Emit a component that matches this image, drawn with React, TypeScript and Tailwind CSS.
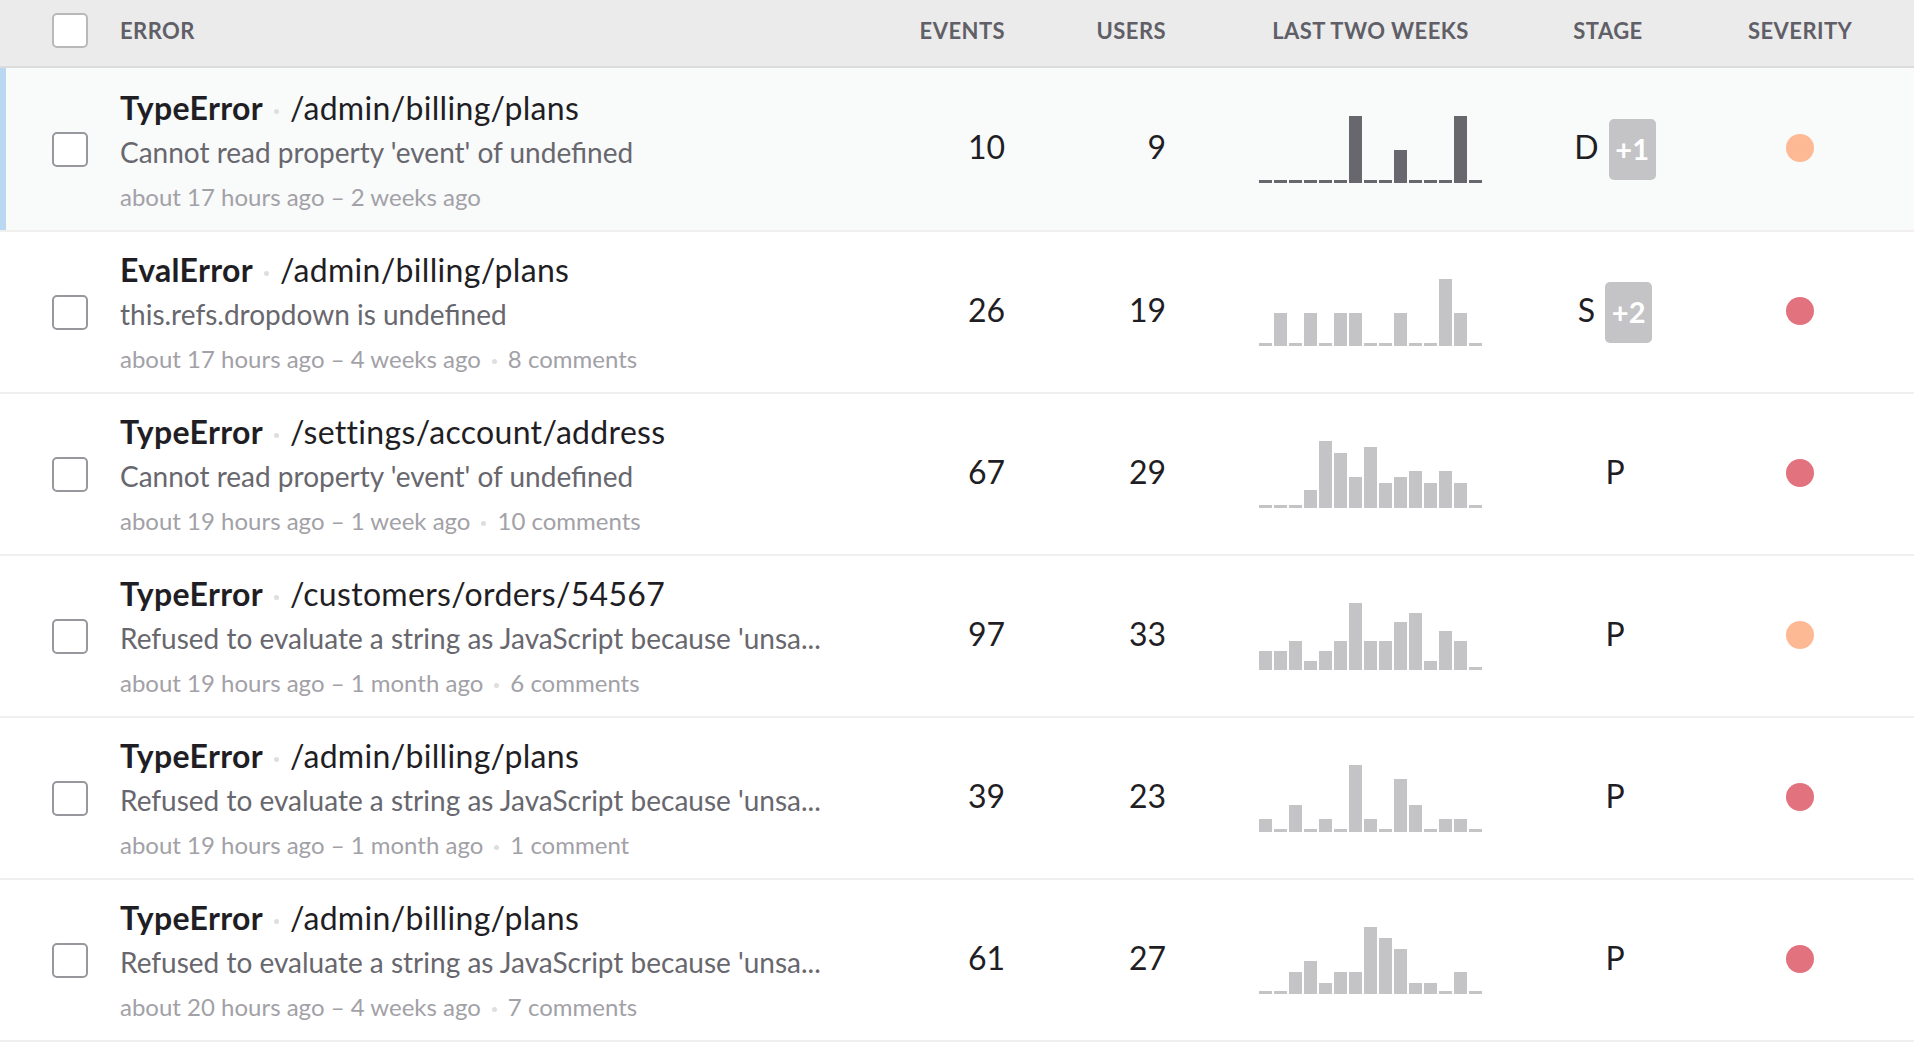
import React from "react";

type Row = {
  type: string;
  path: string;
  message: string;
  time: string;
  comments?: string;
  events: number;
  users: number;
  bars: number[];
  stage: string;
  extra?: string;
  severity: "high" | "medium";
  selected?: boolean;
};

const rows: Row[] = [
  {
    type: "TypeError",
    path: "/admin/billing/plans",
    message: "Cannot read property 'event' of undefined",
    time: "about 17 hours ago – 2 weeks ago",
    events: 10,
    users: 9,
    bars: [3, 3, 3, 3, 3, 3, 67, 3, 3, 33, 3, 3, 3, 67, 3],
    stage: "D",
    extra: "+1",
    severity: "medium",
    selected: true,
  },
  {
    type: "EvalError",
    path: "/admin/billing/plans",
    message: "this.refs.dropdown is undefined",
    time: "about 17 hours ago – 4 weeks ago",
    comments: "8 comments",
    events: 26,
    users: 19,
    bars: [3, 33, 3, 33, 3, 33, 33, 3, 3, 33, 3, 3, 67, 33, 3],
    stage: "S",
    extra: "+2",
    severity: "high",
  },
  {
    type: "TypeError",
    path: "/settings/account/address",
    message: "Cannot read property 'event' of undefined",
    time: "about 19 hours ago – 1 week ago",
    comments: "10 comments",
    events: 67,
    users: 29,
    bars: [3, 3, 3, 18, 67, 55, 31, 61, 25, 31, 37, 25, 37, 25, 3],
    stage: "P",
    severity: "high",
  },
  {
    type: "TypeError",
    path: "/customers/orders/54567",
    message: "Refused to evaluate a string as JavaScript because 'unsa...",
    time: "about 19 hours ago – 1 month ago",
    comments: "6 comments",
    events: 97,
    users: 33,
    bars: [19, 19, 29, 9, 19, 29, 67, 29, 29, 48, 57, 9, 39, 29, 3],
    stage: "P",
    severity: "medium",
  },
  {
    type: "TypeError",
    path: "/admin/billing/plans",
    message: "Refused to evaluate a string as JavaScript because 'unsa...",
    time: "about 19 hours ago – 1 month ago",
    comments: "1 comment",
    events: 39,
    users: 23,
    bars: [13, 3, 27, 3, 13, 3, 67, 13, 3, 53, 27, 3, 13, 13, 3],
    stage: "P",
    severity: "high",
  },
  {
    type: "TypeError",
    path: "/admin/billing/plans",
    message: "Refused to evaluate a string as JavaScript because 'unsa...",
    time: "about 20 hours ago – 4 weeks ago",
    comments: "7 comments",
    events: 61,
    users: 27,
    bars: [3, 3, 22, 33, 11, 22, 22, 67, 56, 45, 11, 11, 3, 22, 3],
    stage: "P",
    severity: "high",
  },
];

const cols =
  "grid grid-cols-[120px_1fr_140px_161px_316px_266px_104px] pr-[62px]";

function Checkbox({ light }: { light?: boolean }) {
  return (
    <div
      className={`w-[36px] h-[35px] rounded-[5px] border-2 bg-white ${
        light ? "border-[#b9b9bc]" : "border-[#98979d]"
      }`}
    />
  );
}

function Dot() {
  return (
    <span className="inline-block w-[5px] h-[5px] rounded-full bg-[#dedee0] mx-[11px] align-middle" />
  );
}

function Sparkline({ bars, dark }: { bars: number[]; dark?: boolean }) {
  return (
    <div className="flex items-end gap-[2px] h-[67px] w-[223px]">
      {bars.map((h, i) => (
        <div
          key={i}
          className={`w-[13px] ${dark ? "bg-[#68676d]" : "bg-[#c4c4c7]"}`}
          style={{ height: h }}
        />
      ))}
    </div>
  );
}

function ErrorRow({ row }: { row: Row }) {
  return (
    <div
      className={`${cols} items-center border-b-2 border-[#f2f0ee] ${
        row.selected
          ? "h-[164px] bg-[#f9fafa] shadow-[inset_6px_0_0_#bad8f2]"
          : "h-[162px] bg-white"
      }`}
    >
      <div className="pl-[52px]">
        <Checkbox />
      </div>
      <div
        className={`self-start leading-[45px] whitespace-nowrap ${
          row.selected ? "pt-[17px]" : "pt-[15px]"
        }`}
      >
        <div className="text-[32px] text-[#1f1e24] tracking-[0.01em]">
          <span className="font-bold">{row.type}</span>
          <Dot />
          <span>{row.path}</span>
        </div>
        <div className="text-[28px] text-[#68676e]">{row.message}</div>
        <div className="text-[24px] text-[#a2a1a7] leading-[44px]">
          {row.time}
          {row.comments && (
            <>
              <Dot />
              {row.comments}
            </>
          )}
        </div>
      </div>
      <div className="text-right text-[32px] text-[#1f1e24] pb-[5px]">{row.events}</div>
      <div className="text-right text-[32px] text-[#1f1e24] pb-[5px]">{row.users}</div>
      <div className="flex justify-end">
        <Sparkline bars={row.bars} dark={row.selected} />
      </div>
      <div className="flex items-center justify-center gap-[10px] text-[32px] text-[#1f1e24]">
        <span className="pb-[5px]">{row.stage}</span>
        {row.extra && (
          <span className="w-[47px] h-[61px] rounded-[5px] bg-[#c4c4c7] text-white text-[29px] font-bold flex items-center justify-center">
            {row.extra}
          </span>
        )}
      </div>
      <div className="flex justify-center pb-[3px]">
        <div
          className={`w-[28px] h-[28px] rounded-full ${
            row.severity === "high" ? "bg-[#e2727e]" : "bg-[#fdb994]"
          }`}
        />
      </div>
    </div>
  );
}

export default function App() {
  return (
    <div className="min-h-screen bg-white font-['Lato',sans-serif]">
      <div
        className={`${cols} h-[68px] pb-[6px] items-center bg-[#ebebeb] border-b-2 border-[#dcdcdc] text-[22px] font-bold text-[#605f67] tracking-[0.02em]`}
      >
        <div className="pl-[52px]">
          <Checkbox light />
        </div>
        <div>ERROR</div>
        <div className="text-right">EVENTS</div>
        <div className="text-right">USERS</div>
        <div className="pl-[93px] text-center">LAST TWO WEEKS</div>
        <div className="text-center pr-[14px]">STAGE</div>
        <div className="text-center">SEVERITY</div>
      </div>
      {rows.map((row, i) => (
        <ErrorRow key={i} row={row} />
      ))}
    </div>
  );
}
